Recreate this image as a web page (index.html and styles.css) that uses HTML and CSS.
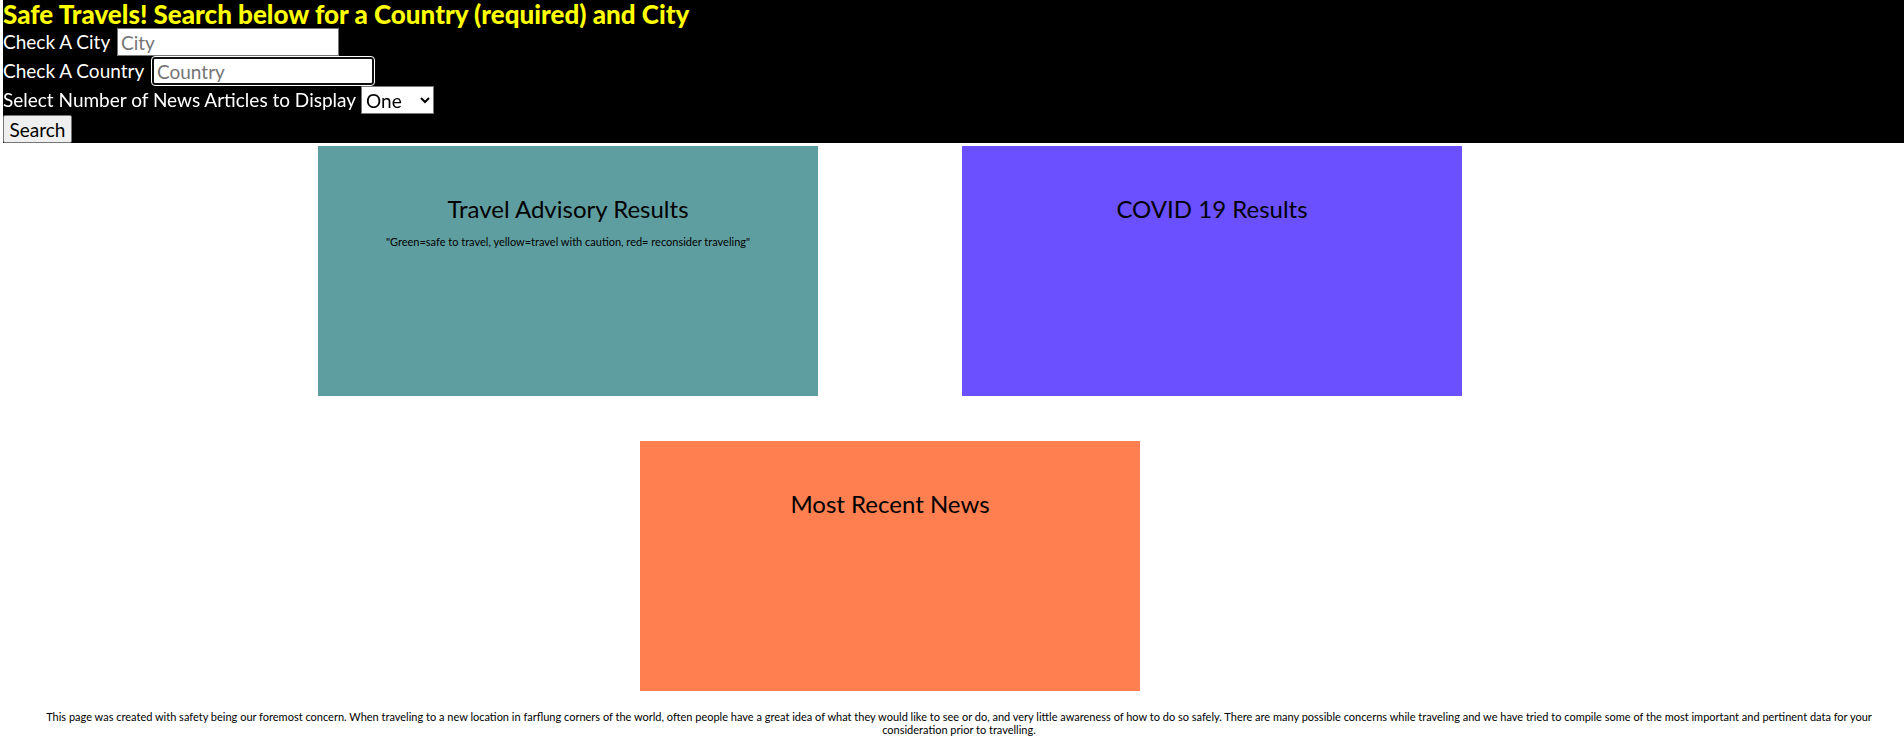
FILE: index.html
```html
<!DOCTYPE html>
<html lang="en">
<head>
<meta charset="utf-8">
<title>Safe Travels</title>
<link rel="stylesheet" href="styles.css">
</head>
<body>
<header class="header">
  <h1 class="title">Safe Travels! Search below for a Country (required) and City</h1>
  <form class="search">
    <div class="field">
      <label class="label label-city" for="city">Check A City</label>
      <input class="control text-input" id="city" type="text" placeholder="City">
    </div>
    <div class="field">
      <label class="label label-country" for="country">Check A Country</label>
      <input class="control text-input" id="country" type="text" placeholder="Country" autofocus>
    </div>
    <div class="field">
      <label class="label" for="count">Select Number of News Articles to Display</label>
      <select class="control count" id="count">
        <option>One</option>
        <option>Two</option>
        <option>Three</option>
      </select>
    </div>
    <button class="control submit" type="submit">Search</button>
  </form>
</header>
<main class="results">
  <section class="card advisory">
    <h2 class="card-title">Travel Advisory Results</h2>
    <p class="legend">"Green=safe to travel, yellow=travel with caution, red= reconsider traveling"</p>
  </section>
  <section class="card covid">
    <h2 class="card-title">COVID 19 Results</h2>
  </section>
  <section class="card news">
    <h2 class="card-title">Most Recent News</h2>
  </section>
</main>
<footer class="footer">This page was created with safety being our foremost concern. When traveling to a new location in farflung corners of the world, often people have a great idea of what they would like to see or do, and very little awareness of how to do so safely. There are many possible concerns while traveling and we have tried to compile some of the most important and pertinent data for your consideration prior to travelling.</footer>
</body>
</html>
```
FILE: styles.css
```css
* {
  box-sizing: border-box;
}

body {
  margin: 0 0 0 3px;
  background: #fff;
  color: #000;
  font-family: "Gill Sans", "Gill Sans MT", Lato, sans-serif;
}

.header {
  background: #000;
  color: #fff;
}

.title {
  margin: 0;
  color: #ff0;
  font-size: 26px;
  line-height: 28px;
  font-weight: 900;
}

.field {
  display: flex;
  align-items: flex-start;
  gap: 5px;
  height: 29px;
}

.label {
  font-size: 19px;
  line-height: 28px;
  white-space: nowrap;
}

.label-city {
  min-width: 109px;
}

.label-country {
  min-width: 144px;
}

.control {
  height: 28px;
  border: 1px solid #767676;
  font-family: inherit;
  font-size: 19px;
}

.text-input {
  width: 222px;
  padding: 0 3px;
  background: #fff;
}

.text-input::placeholder {
  color: #757575;
}

.text-input:focus {
  border: 2px solid #101010;
  border-radius: 3px;
  outline: 1px solid #fff;
}

.count {
  width: 73px;
  padding: 0;
  border-radius: 0;
  background: #fff;
  color: #000;
}

.submit {
  display: block;
  width: 69px;
  padding: 0;
  border-radius: 2px;
  background: #efefef;
  color: #000;
}

.results {
  display: flex;
  flex-wrap: wrap;
  justify-content: center;
  gap: 45px 144px;
  margin-top: 3px;
  padding-right: 127px;
}

.card {
  width: 500px;
  min-height: 250px;
  padding: 47px 20px;
  text-align: center;
}

.advisory {
  background: #5f9ea0;
}

.covid {
  background: #6b50ff;
}

.news {
  background: #ff7f50;
}

.card-title {
  margin: 0;
  font-size: 24px;
  line-height: 32px;
  font-weight: 400;
}

.legend {
  margin: 9px 0 0;
  font-size: 11px;
  line-height: 16px;
}

.footer {
  margin-top: 19px;
  padding: 0 13px 0 24px;
  font-size: 11px;
  line-height: 13px;
  text-align: center;
}
```
